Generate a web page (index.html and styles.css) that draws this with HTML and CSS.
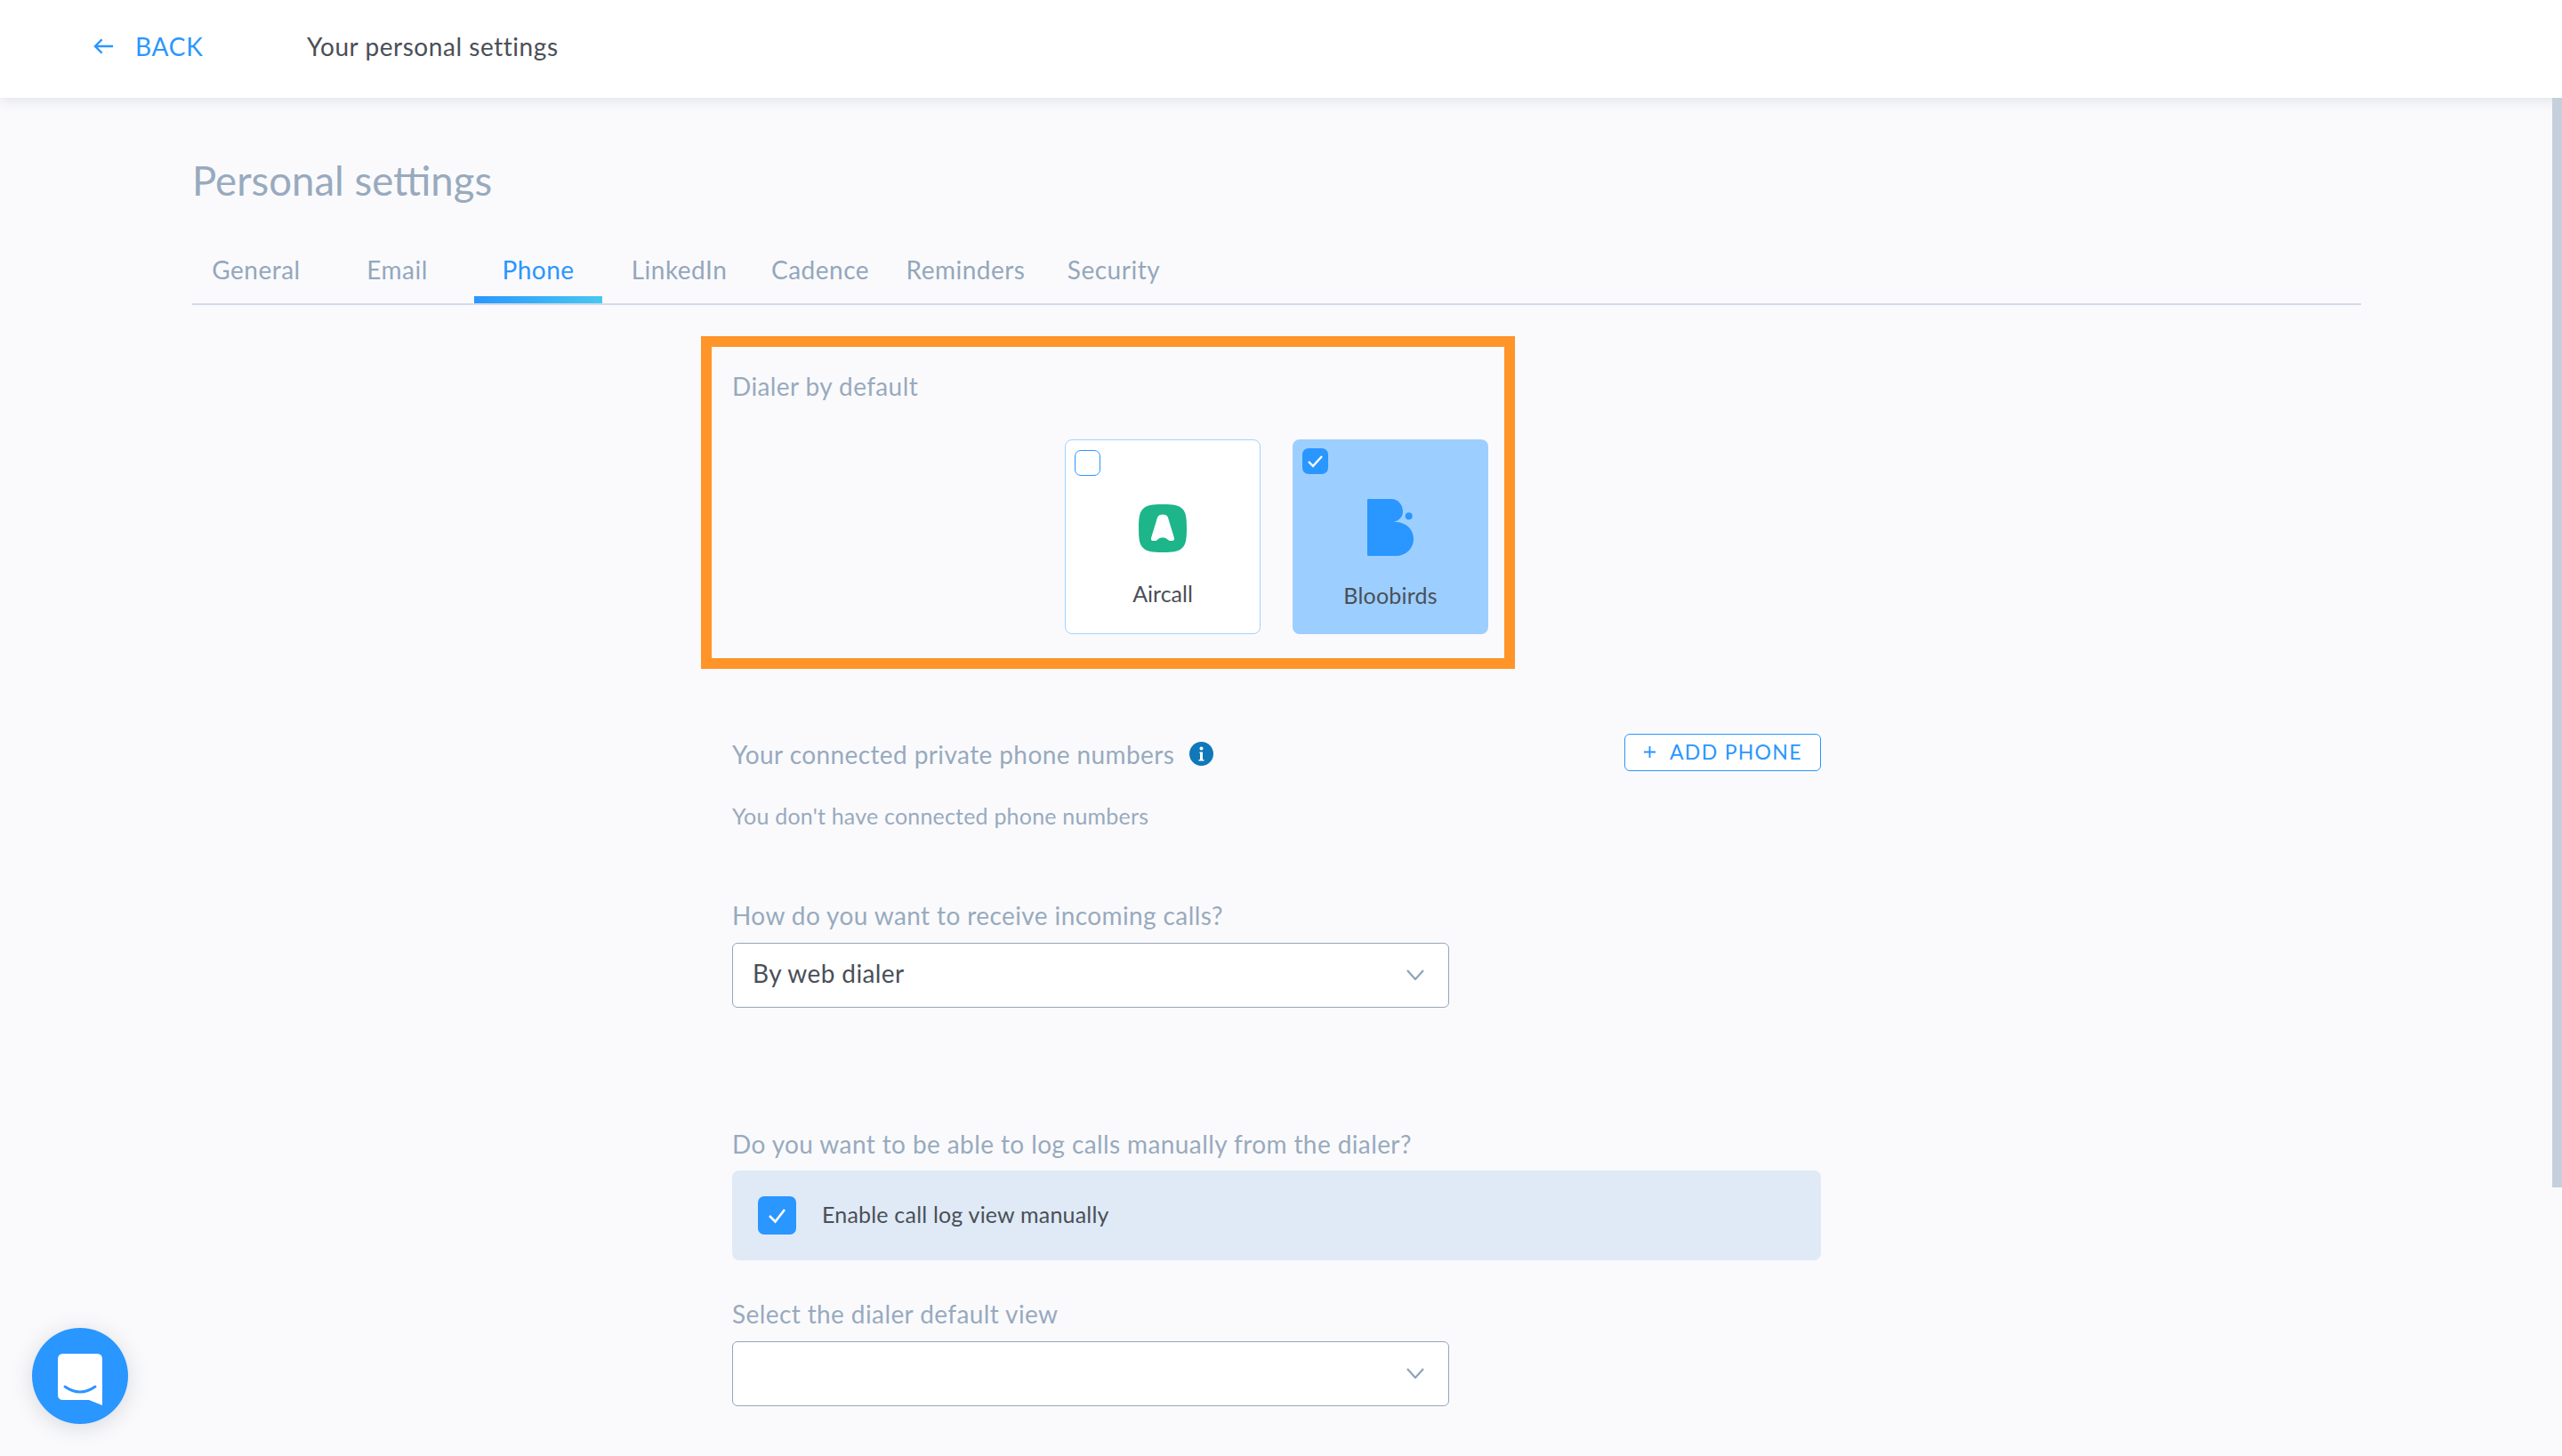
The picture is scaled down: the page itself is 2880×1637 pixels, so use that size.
FILE: index.html
```html
<!DOCTYPE html>
<html lang="en">
<head>
<meta charset="utf-8">
<title>Personal settings</title>
<link rel="stylesheet" href="styles.css">
</head>
<body>
<header class="topbar">
  <a class="back">
    <svg class="back-arrow" viewBox="0 0 24 20"><path d="M23 10H2M10 2l-8 8 8 8"/></svg>
    <span>BACK</span>
  </a>
  <span class="topbar-title">Your personal settings</span>
</header>
<main class="main">
  <h1 class="page-title">Personal settings</h1>
  <nav class="tabs">
    <span class="tab">General</span>
    <span class="tab">Email</span>
    <span class="tab tab-active">Phone</span>
    <span class="tab">LinkedIn</span>
    <span class="tab">Cadence</span>
    <span class="tab">Reminders</span>
    <span class="tab tab-last">Security</span>
  </nav>
  <div class="form">
    <section class="highlight">
      <div class="label">Dialer by default</div>
      <div class="cards">
        <div class="card card-off">
          <span class="card-check check-empty"></span>
          <svg class="logo-aircall" viewBox="0 0 54 54"><path class="aircall-bg" d="M27 0C39 0 45.500 1 49 5C53 8.500 54 15 54 27C54 39 53 45.500 49 49C45.500 53 39 54 27 54C15 54 8.500 53 5 49C1 45.500 0 39 0 27C0 15 1 8.500 5 5C8.500 1 15 0 27 0Z"/><path class="aircall-bell" d="M27 11.500C30 11.500 32 12 33 15C35 22 38 31 40 38C40.500 40.500 39 41 37 41C35 41 34 41 33 40C31 38 29.500 37.500 27 37.500C24.500 37.500 23 38 21 40C20 41 19 41 17 41C15 41 13.500 40.500 14 38C16 31 19 22 21 15C22 12 24 11.500 27 11.500Z"/></svg>
          <span class="card-name name-aircall">Aircall</span>
        </div>
        <div class="card card-on">
          <span class="card-check check-full"><svg viewBox="0 0 29 29"><path d="M7 15l5 5 10-11"/></svg></span>
          <svg class="logo-bloobirds" viewBox="0 0 52 64"><path d="M1 0H27C35 0 40 7 40 14C40 20 36 24 29.500 26C42 25 52 33 52 45C52 56 43 64 32 64H1Q0 64 0 63V1Q0 0 1 0Z"/><circle cx="46.700" cy="19.300" r="4"/></svg>
          <span class="card-name name-bloobirds">Bloobirds</span>
        </div>
      </div>
    </section>

    <div class="phones-row">
      <div class="phones-label">
        <span class="label">Your connected private phone numbers</span>
        <svg class="info" viewBox="0 0 27 27"><circle cx="13.500" cy="13.500" r="13.500"/><circle class="info-i" cx="13.500" cy="7.500" r="2"/><path class="info-i" d="M11.500 11.500h3.500v8.500h1.500v1.500h-6v-1.500h1.500v-7h-.5z"/></svg>
      </div>
      <button class="add-phone">
        <svg viewBox="0 0 16 16"><path d="M8 1v14M1 8h14"/></svg>
        <span>ADD PHONE</span>
      </button>
    </div>
    <p class="empty">You don't have connected phone numbers</p>

    <div class="label label-calls">How do you want to receive incoming calls?</div>
    <div class="select">
      <span class="select-text">By web dialer</span>
      <svg class="chevron" viewBox="0 0 20 12"><path d="M1 1l9 10 9-10"/></svg>
    </div>

    <div class="label label-log">Do you want to be able to log calls manually from the dialer?</div>
    <div class="enable-bar">
      <span class="bar-check"><svg viewBox="0 0 43 43"><path d="M13 22l6.500 6.500L30 15"/></svg></span>
      <span class="bar-text">Enable call log view manually</span>
    </div>

    <div class="label label-view">Select the dialer default view</div>
    <div class="select select-view">
      <span class="select-text"></span>
      <svg class="chevron" viewBox="0 0 20 12"><path d="M1 1l9 10 9-10"/></svg>
    </div>
  </div>
</main>
<div class="scroll-thumb"></div>
<button class="chat">
  <svg viewBox="0 0 50 58"><path class="chat-bubble" d="M6 0H44Q50 0 50 6V58L35 52H6Q0 52 0 46V6Q0 0 6 0Z"/><path class="chat-smile" d="M8 37Q25 49 42 37"/></svg>
</button>
</body>
</html>
```

FILE: styles.css
```css
* { box-sizing: border-box; }
html, body { margin: 0; height: 100%; }
body {
  height: 1637px;
  overflow: hidden;
  background: #fafafc;
  font-family: "Lato", "Liberation Sans", sans-serif;
  color: #4a4f57;
}
.topbar {
  height: 110px;
  background: #fff;
  display: flex;
  align-items: center;
  padding: 0 0 7px 105px;
  box-shadow: 0 2px 14px rgba(60, 70, 90, 0.14);
  position: relative;
}
.back {
  display: flex;
  align-items: center;
  gap: 24px;
  width: 240px;
  color: #2a96ff;
  font-size: 28px;
  letter-spacing: 0.8px;
}
.back-arrow { width: 23px; height: 20px; fill: none; stroke: #2a96ff; stroke-width: 2.4; }
.topbar-title { font-size: 28px; letter-spacing: 0.55px; }
.main { padding: 66px 226px 0 216px; }
.page-title {
  margin: 0;
  font-size: 45.5px;
  line-height: 54px;
  font-weight: 400;
  color: #98aabe;
}
.tabs {
  display: flex;
  gap: 14.5px;
  margin-top: 56px;
  border-bottom: 2px solid #d3dbe6;
}
.tab {
  min-width: 144px;
  padding: 0 10px 21px;
  text-align: center;
  font-size: 28px;
  line-height: 34px;
  letter-spacing: 0.5px;
  color: #94a7bc;
}
.tab-active {
  color: #2a96ff;
  padding-bottom: 13px;
  border-bottom: 8px solid;
  border-image: linear-gradient(90deg, #2a96ff, #47c8f0) 1;
}
.tab-last { margin-left: 3px; }
.form { width: 1224px; margin-left: 607px; }
.label {
  font-size: 28px;
  line-height: 34px;
  letter-spacing: 0.4px;
  color: #98aabe;
}
.highlight {
  width: 915px;
  height: 374px;
  margin: 35px 0 0 -35px;
  padding: 27px 18px 0 23px;
  border: 12px solid #ff9429;
}
.cards {
  display: flex;
  justify-content: flex-end;
  gap: 36px;
  margin-top: 43px;
}
.card {
  position: relative;
  width: 220px;
  height: 219px;
  border-radius: 8px;
  display: flex;
  flex-direction: column;
  align-items: center;
}
.card-off { background: #fff; border: 1.5px solid #a3d3ff; padding-top: 72px; }
.card-on { background: #9ccfff; padding-top: 67px; }
.card-check {
  position: absolute;
  width: 29px;
  height: 29px;
  border-radius: 7px;
}
.check-empty { left: 9.5px; top: 10.5px; border: 1.5px solid #2a96ff; background: #fff; }
.check-full { left: 11px; top: 10px; background: #2a96ff; }
.check-full svg { display: block; fill: none; stroke: #fff; stroke-width: 2.4; }
.logo-aircall { width: 54px; height: 54px; }
.aircall-bg { fill: #1db58a; }
.aircall-bell { fill: #fff; }
.logo-bloobirds { width: 52px; height: 64px; fill: #2a96ff; }
.card-name { font-size: 25px; line-height: 30px; }
.name-aircall { margin-top: 31px; }
.name-bloobirds { margin-top: 29px; letter-spacing: 0.2px; }
.phones-row {
  display: flex;
  align-items: center;
  justify-content: space-between;
  margin-top: 73px;
  height: 42px;
}
.phones-label { display: flex; align-items: center; gap: 17px; padding-top: 3px; }
.info { width: 27px; height: 27px; fill: #0f78b8; }
.info .info-i { fill: #fff; }
.add-phone {
  width: 221px;
  height: 42px;
  display: flex;
  align-items: center;
  gap: 15px;
  padding: 0 0 2px 20px;
  background: #fff;
  border: 1.5px solid #2a96ff;
  border-radius: 6px;
  color: #2a96ff;
  font-family: inherit;
  font-size: 23px;
  letter-spacing: 1.3px;
}
.add-phone svg { width: 15px; height: 15px; fill: none; stroke: #2a96ff; stroke-width: 2; flex: none; }
.empty {
  margin: 35px 0 0;
  font-size: 25px;
  line-height: 30px;
  letter-spacing: 0.2px;
  color: #98aabe;
}
.label-calls { margin-top: 80px; }
.select {
  width: 806px;
  height: 73px;
  margin-top: 14px;
  padding: 0 27px 2px 22px;
  display: flex;
  align-items: center;
  justify-content: space-between;
  background: #fff;
  border: 1.5px solid #94a7bc;
  border-radius: 6px;
  font-size: 28px;
  letter-spacing: 0.4px;
}
.select-text { padding-bottom: 4px; }
.chevron { width: 20px; height: 12px; fill: none; stroke: #8fa3b9; stroke-width: 2.2; }
.label-log { margin-top: 136px; }
.enable-bar {
  height: 101px;
  margin-top: 13px;
  padding-left: 29px;
  display: flex;
  align-items: center;
  gap: 29px;
  background: #dfeaf6;
  border-radius: 8px;
}
.bar-check { width: 43px; height: 43px; border-radius: 7px; background: #2a96ff; }
.bar-check svg { display: block; fill: none; stroke: #fff; stroke-width: 2.6; }
.bar-text { font-size: 25px; letter-spacing: 0.2px; padding-bottom: 4px; }
.label-view { margin-top: 43px; }
.select-view { margin-top: 14px; }
.scroll-thumb {
  position: fixed;
  right: 0;
  top: 110px;
  width: 11px;
  height: 1225px;
  background: #c5d0dc;
}
.chat {
  position: fixed;
  left: 36px;
  top: 1493px;
  width: 108px;
  height: 108px;
  padding: 0;
  border: 0;
  border-radius: 50%;
  background: #2a96ff;
  box-shadow: 0 4px 24px rgba(60, 70, 90, 0.18);
  display: flex;
  align-items: center;
  justify-content: center;
}
.chat svg { width: 50px; height: 58px; margin-top: 8px; }
.chat-bubble { fill: #fff; }
.chat-smile { fill: none; stroke: #2a96ff; stroke-width: 3; stroke-linecap: round; }
```
